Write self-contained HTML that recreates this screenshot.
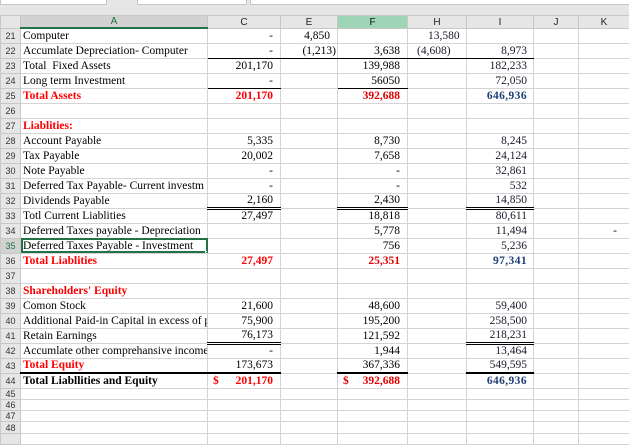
<!DOCTYPE html>
<html><head><meta charset="utf-8"><style>
*{margin:0;padding:0;box-sizing:border-box}
body{width:629px;height:438px;overflow:hidden;background:#fff;position:relative;font-family:"Liberation Serif",serif;font-size:11.5px;color:#000}
.top{position:absolute;left:0;top:0;width:629px;height:15px;background:#e6e6e6}
.box{position:absolute;top:0;height:5px;background:#fff;border:1px solid #c6c6c6;border-top:none}
table{position:absolute;left:0;top:15px;border-collapse:collapse;table-layout:fixed;width:629px}
td{border:1px solid #d4d4d4;height:15px;padding:0;white-space:nowrap;overflow:hidden;line-height:13px;vertical-align:bottom}
tr.h td{height:12px;background:#e6e6e6;font-family:"Liberation Sans",sans-serif;font-size:10px;text-align:center;color:#222;border-color:#c8c8c8;line-height:11px}
tr.h td.sa{background:#d2d2d2;border-bottom:2px solid #217346;color:#217346}
tr.h td.sf{background:#9fd5b7;color:#111}
td.n{background:#e6e6e6;font-family:"Liberation Sans",sans-serif;font-size:9px;color:#333;text-align:center;border-color:#c8c8c8}
td.ns{background:#d2d2d2;color:#217346}
tr.s td{height:11.3px;line-height:10px}
.r{text-align:right;padding-right:7px}
.i{text-align:right;padding-right:6px;color:#1a1a2a;font-size:11.5px}
.a{padding-left:2px}
.red{color:#f00;font-weight:bold}
.it{color:#1f3f73;font-weight:bold;font-size:11.5px;letter-spacing:.4px}
.bb{border-bottom:1px solid #000}
.db{border-bottom:3px double #000}
.tb{border-bottom:2px solid #000}
.sel{outline:2px solid #217346;outline-offset:-2px;position:relative}
.hd{position:absolute;right:-3px;bottom:-3px;width:5px;height:5px;background:#217346;border:1px solid #fff}
.dol{float:left;padding-left:5px}
</style></head><body>
<div class="top"><div class="box" style="left:0;width:107px"></div><div class="box" style="left:137px;width:110px"></div><div class="box" style="left:250px;width:380px"></div></div>
<table>
<colgroup><col style="width:20px"><col style="width:187px"><col style="width:73px"><col style="width:57px"><col style="width:70px"><col style="width:59px"><col style="width:67px"><col style="width:45px"><col style="width:51px"></colgroup>
<tr class="h"><td></td><td class="sa">A</td><td>C</td><td>E</td><td class="sf">F</td><td>H</td><td>I</td><td>J</td><td>K</td></tr>
<tr><td class="n">21</td><td class="a">Computer</td><td class="r">-</td><td class="r" style="padding-right:7px">4,850</td><td></td><td class="i" style="text-align:left;padding-left:20px">13,580</td><td></td><td></td><td></td></tr>
<tr><td class="n">22</td><td class="a">Accumlate Depreciation- Computer</td><td class="r bb">-</td><td class="r bb" style="padding-right:1px">(1,213)</td><td class="r bb">3,638</td><td class="i bb" style="text-align:left;padding-left:9px">(4,608)</td><td class="i bb">8,973</td><td></td><td></td></tr>
<tr><td class="n">23</td><td class="a">Total&nbsp; Fixed Assets</td><td class="r">201,170</td><td></td><td class="r">139,988</td><td></td><td class="i">182,233</td><td></td><td></td></tr>
<tr><td class="n">24</td><td class="a">Long term Investment</td><td class="r bb">-</td><td></td><td class="r bb">56050</td><td></td><td class="i">72,050</td><td></td><td></td></tr>
<tr><td class="n">25</td><td class="a red">Total Assets</td><td class="r red">201,170</td><td></td><td class="r red" style="color:#e00000">392,688</td><td></td><td class="i it">646,936</td><td></td><td></td></tr>
<tr><td class="n">26</td><td></td><td></td><td></td><td></td><td></td><td></td><td></td><td></td></tr>
<tr><td class="n">27</td><td class="a red">Liablities:</td><td></td><td></td><td></td><td></td><td></td><td></td><td></td></tr>
<tr><td class="n">28</td><td class="a">Account Payable</td><td class="r">5,335</td><td></td><td class="r">8,730</td><td></td><td class="i">8,245</td><td></td><td></td></tr>
<tr><td class="n">29</td><td class="a">Tax Payable</td><td class="r">20,002</td><td></td><td class="r">7,658</td><td></td><td class="i">24,124</td><td></td><td></td></tr>
<tr><td class="n">30</td><td class="a">Note Payable</td><td class="r">-</td><td></td><td class="r">-</td><td></td><td class="i">32,861</td><td></td><td></td></tr>
<tr><td class="n">31</td><td class="a">Deferred Tax Payable- Current investm</td><td class="r">-</td><td></td><td class="r">-</td><td></td><td class="i">532</td><td></td><td></td></tr>
<tr><td class="n">32</td><td class="a">Dividends Payable</td><td class="r db">2,160</td><td></td><td class="r db">2,430</td><td></td><td class="i db">14,850</td><td></td><td></td></tr>
<tr><td class="n">33</td><td class="a">Totl Current Liablities</td><td class="r">27,497</td><td></td><td class="r">18,818</td><td></td><td class="i">80,611</td><td></td><td></td></tr>
<tr><td class="n">34</td><td class="a">Deferred Taxes payable - Depreciation</td><td></td><td></td><td class="r">5,778</td><td></td><td class="i">11,494</td><td></td><td style="text-align:right;padding-right:12px">-</td></tr>
<tr><td class="n ns">35</td><td class="a sel">Deferred Taxes Payable - Investment<div class="hd"></div></td><td></td><td></td><td class="r">756</td><td></td><td class="i">5,236</td><td></td><td></td></tr>
<tr><td class="n">36</td><td class="a red">Total Liablities</td><td class="r red">27,497</td><td></td><td class="r red" style="color:#e00000">25,351</td><td></td><td class="i it">97,341</td><td></td><td></td></tr>
<tr><td class="n">37</td><td></td><td></td><td></td><td></td><td></td><td></td><td></td><td></td></tr>
<tr><td class="n">38</td><td class="a red">Shareholders' Equity</td><td></td><td></td><td></td><td></td><td></td><td></td><td></td></tr>
<tr><td class="n">39</td><td class="a">Comon Stock</td><td class="r">21,600</td><td></td><td class="r">48,600</td><td></td><td class="i">59,400</td><td></td><td></td></tr>
<tr><td class="n">40</td><td class="a">Additional Paid-in Capital in excess of p</td><td class="r">75,900</td><td></td><td class="r">195,200</td><td></td><td class="i">258,500</td><td></td><td></td></tr>
<tr><td class="n">41</td><td class="a">Retain Earnings</td><td class="r db">76,173</td><td></td><td class="r">121,592</td><td></td><td class="i db">218,231</td><td></td><td></td></tr>
<tr><td class="n">42</td><td class="a">Accumlate other comprehansive income</td><td class="r">-</td><td></td><td class="r">1,944</td><td></td><td class="i">13,464</td><td></td><td></td></tr>
<tr><td class="n">43</td><td class="a red tb">Total Equity</td><td class="r tb">173,673</td><td></td><td class="r tb">367,336</td><td></td><td class="i tb">549,595</td><td></td><td></td></tr>
<tr><td class="n">44</td><td class="a" style="font-weight:bold">Total Liabllities and Equity</td><td class="r red"><span class="dol">$</span>201,170</td><td></td><td class="r red" style="color:#e00000"><span class="dol">$</span>392,688</td><td></td><td class="i it">646,936</td><td></td><td></td></tr>
<tr class="s"><td class="n">45</td><td></td><td></td><td></td><td></td><td></td><td></td><td></td><td></td></tr>
<tr class="s"><td class="n">46</td><td></td><td></td><td></td><td></td><td></td><td></td><td></td><td></td></tr>
<tr class="s"><td class="n">47</td><td></td><td></td><td></td><td></td><td></td><td></td><td></td><td></td></tr>
<tr class="s"><td class="n">48</td><td></td><td></td><td></td><td></td><td></td><td></td><td></td><td></td></tr>
<tr class="s"><td class="n"></td><td></td><td></td><td></td><td></td><td></td><td></td><td></td><td></td></tr>
</table>
</body></html>
